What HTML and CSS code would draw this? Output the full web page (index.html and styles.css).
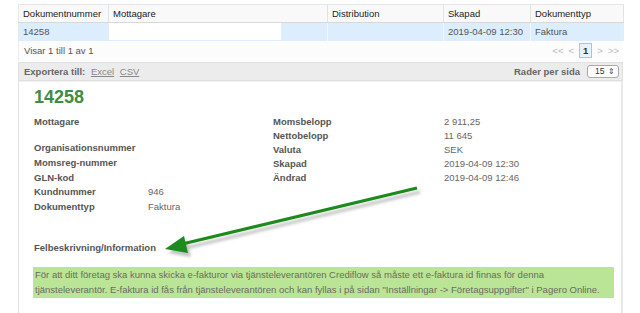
FILE: index.html
```html
<!DOCTYPE html>
<html lang="sv">
<head>
    <meta charset="UTF-8">
    <title>Dokument</title>
    <link rel="stylesheet" href="styles.css">
</head>
<body>
    <div class="wrap">
        <table class="grid">
            <thead>
                <tr>
                    <th class="c-nr">Dokumentnummer</th>
                    <th class="c-mot">Mottagare</th>
                    <th class="c-dist">Distribution</th>
                    <th class="c-skap">Skapad</th>
                    <th class="c-typ">Dokumenttyp</th>
                </tr>
            </thead>
            <tbody>
                <tr class="selected">
                    <td>14258</td>
                    <td class="hidden-cell"><span class="blank"></span></td>
                    <td></td>
                    <td>2019-04-09 12:30</td>
                    <td>Faktura</td>
                </tr>
            </tbody>
        </table>

        <div class="info-row">
            <span>Visar 1 till 1 av 1</span>
            <div class="pager">
                <span>&lt;&lt;</span>
                <span>&lt;</span>
                <span class="page current">1</span>
                <span>&gt;</span>
                <span>&gt;&gt;</span>
            </div>
        </div>

        <div class="export-bar">
            <div>
                <strong>Exportera till:</strong>
                <a href="#">Excel</a>
                <a href="#">CSV</a>
            </div>
            <div class="per-page">
                <strong>Rader per sida</strong>
                <span class="select">15 <span class="arrows">&#8661;</span></span>
            </div>
        </div>

        <div class="detail">
            <h2>14258</h2>
            <div class="columns">
                <div class="col col-left">
                    <div class="row"><span class="lbl">Mottagare</span><span class="val"></span></div>
                    <div class="row spacer"></div>
                    <div class="row"><span class="lbl">Organisationsnummer</span><span class="val"></span></div>
                    <div class="row"><span class="lbl">Momsreg-nummer</span><span class="val"></span></div>
                    <div class="row"><span class="lbl">GLN-kod</span><span class="val"></span></div>
                    <div class="row"><span class="lbl">Kundnummer</span><span class="val">946</span></div>
                    <div class="row"><span class="lbl">Dokumenttyp</span><span class="val">Faktura</span></div>
                </div>
                <div class="col col-right">
                    <div class="row"><span class="lbl">Momsbelopp</span><span class="val">2 911,25</span></div>
                    <div class="row"><span class="lbl">Nettobelopp</span><span class="val">11 645</span></div>
                    <div class="row"><span class="lbl">Valuta</span><span class="val">SEK</span></div>
                    <div class="row"><span class="lbl">Skapad</span><span class="val">2019-04-09 12:30</span></div>
                    <div class="row"><span class="lbl">Ändrad</span><span class="val">2019-04-09 12:46</span></div>
                </div>
            </div>

            <h3>Felbeskrivning/Information</h3>
            <div class="message">
                För att ditt företag ska kunna skicka e-fakturor via tjänsteleverantören Crediflow så måste ett e-faktura id finnas för denna<br>
                tjänsteleverantör. E-faktura id fås från tjänsteleverantören och kan fyllas i på sidan "Inställningar -&gt; Företagsuppgifter" i Pagero Online.
            </div>

            <!-- annotation arrow drawn on top of the screenshot -->
            <svg class="arrow" width="640" height="240" viewBox="0 0 640 240">
                <defs>
                    <filter id="shadow" x="-20%" y="-50%" width="140%" height="200%">
                        <feGaussianBlur stdDeviation="1.5"/>
                    </filter>
                </defs>
                <g fill="#999" stroke="#999" opacity="0.6" filter="url(#shadow)" transform="translate(3,4)">
                    <line x1="417" y1="106" x2="178" y2="163" stroke-width="3"/>
                    <polygon points="165,167 184,154 188,171" stroke="none"/>
                </g>
                <line x1="417" y1="106" x2="178" y2="163" stroke="#1c8a1c" stroke-width="3"/>
                <polygon points="165,167 184,154 188,171" fill="#1c8a1c"/>
            </svg>
        </div>
    </div>
</body>
</html>
```

FILE: styles.css
```css
* {
    margin: 0;
    padding: 0;
    box-sizing: border-box;
}

body {
    font-family: 'Liberation Sans', Arial, sans-serif;
    font-size: 9.5px;
    color: #555;
    background-color: #fff;
    overflow: hidden;
}

.wrap {
    margin: 4px 0 0 18px;
    width: 605px;
}

/* Result table */
.grid {
    width: 100%;
    border-collapse: collapse;
    table-layout: fixed;
    border-top: 1px solid #e6e6e6;
}

.grid th,
.grid td {
    text-align: left;
    padding: 0 4px;
    white-space: nowrap;
    overflow: hidden;
}

.grid th {
    height: 18px;
    font-weight: normal;
    color: #222;
    background-color: #f9f9f9;
    border-left: 1px solid #e2e2e2;
    border-bottom: 1px solid #d8d8d8;
}

.grid th:first-child {
    border-left: 1px solid #e8e8e8;
}

.grid th:last-child {
    border-right: 1px solid #e2e2e2;
}

.c-nr { width: 90px; }
.c-mot { width: 219px; }
.c-dist { width: 116px; }
.c-skap { width: 87px; }
.c-typ { width: 93px; }

.grid td {
    height: 18px;
    color: #555;
    background-color: #dcedfd;
    border-left: 1px solid #f0f6fc;
}

.grid td:first-child {
    border-left: 1px solid #e8e8e8;
}

.grid td:last-child {
    border-right: 1px solid #e8e8e8;
}

.grid td.hidden-cell {
    padding: 0;
    border-left: 1px solid #e4eaf0;
}

.blank {
    display: block;
    width: 172px;
    height: 17px;
    background-color: #fff;
}

/* Paging row */
.info-row {
    display: flex;
    justify-content: space-between;
    align-items: center;
    height: 20px;
    padding: 0 4px 0 5px;
    color: #555;
    background-color: #fcfcfc;
    border-left: 1px solid #eee;
}

.pager {
    display: flex;
    align-items: center;
    gap: 5px;
    color: #bbb;
}

.page.current {
    color: #333;
    font-weight: bold;
    padding: 0 3px;
    line-height: 13px;
    background-color: #e6f2fc;
    border: 1px solid #9cc8ee;
}

/* Export bar */
.export-bar {
    display: flex;
    justify-content: space-between;
    align-items: center;
    height: 19px;
    margin-top: 1px;
    padding: 0 3px 0 5px;
    background-color: #ececec;
    border: 1px solid #e0e0e0;
    color: #666;
}

.export-bar a {
    color: #888;
    margin-left: 3px;
}

.per-page {
    display: flex;
    align-items: center;
    gap: 7px;
}

.select {
    display: inline-flex;
    justify-content: space-between;
    align-items: center;
    width: 32px;
    height: 13px;
    padding: 0 3px 0 7px;
    color: #333;
    background-color: #fff;
    border: 1px solid #aaa;
    border-radius: 3px;
    font-size: 8.5px;
}

.arrows {
    font-size: 8px;
    color: #444;
}

/* Document details */
.detail {
    position: relative;
    height: 240px;
    padding: 5px 14px 0 15px;
    border-left: 1px solid #e2e2e2;
    border-right: 2px solid #e8e8e8;
    border-top: 1px solid #f0f0f0;
}

.detail h2 {
    font-size: 18px;
    font-weight: bold;
    color: #3f8d45;
    line-height: 20px;
    margin-bottom: 8px;
}

.columns {
    display: flex;
}

.col-left {
    width: 239px;
}

.row {
    display: flex;
    height: 14.75px;
    align-items: center;
}

.row.spacer {
    height: 11px;
}

.col-right .row {
    height: 14px;
}

.col-left .lbl {
    width: 114px;
}

.col-right .lbl {
    width: 171px;
}

.lbl {
    font-weight: bold;
    color: #555;
}

.val {
    color: #666;
}

.detail h3 {
    margin-top: 28px;
    font-size: 9.5px;
    font-weight: bold;
    color: #555;
}

.message {
    margin: 14px 0 0 -1px;
    width: 581px;
    padding: 0 1px 1px 2px;
    font-size: 9.5px;
    line-height: 15px;
    white-space: nowrap;
    overflow: hidden;
    color: #6b6b5f;
    background-color: #bae597;
}

.arrow {
    position: absolute;
    left: -19px;
    top: 0;
    pointer-events: none;
}
```
